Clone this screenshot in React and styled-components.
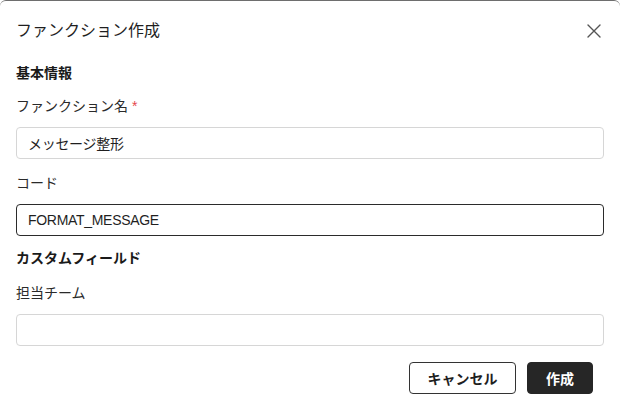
import React from "react";
import styled, { createGlobalStyle } from "styled-components";

const Global = createGlobalStyle`
  html, body { margin: 0; padding: 0; background: #ffffff; }
  body {
    font-family: "Liberation Sans", "Noto Sans CJK JP", sans-serif;
    color: #1f1f1f;
    -webkit-font-smoothing: antialiased;
  }
  * { box-sizing: border-box; }
`;

const Dialog = styled.div`
  width: 620px;
  height: 410px;
  border-top: 1px solid #6e6e6e;
  border-radius: 6px 6px 0 0;
  background: #fff;
  padding: 0 16px;
  display: flex;
  flex-direction: column;
  overflow: hidden;
`;

const Header = styled.div`
  display: flex;
  align-items: center;
  justify-content: space-between;
  padding-top: 19px;
  height: 41px;
`;

const Title = styled.h2`
  margin: 0;
  font-size: 16px;
  line-height: 22px;
  font-weight: 400;
  color: #1f1f1f;
`;

const CloseButton = styled.button`
  border: none;
  background: none;
  padding: 0;
  margin-right: 1px;
  width: 18px;
  height: 18px;
  display: flex;
  align-items: center;
  justify-content: center;
  color: #555;
  cursor: pointer;
`;

const SectionTitle = styled.h3`
  margin: ${(p) => p.$top}px 0 0;
  font-size: 14px;
  line-height: 22px;
  font-weight: 700;
  color: #1a1a1a;
`;

const Field = styled.div`
  display: flex;
  flex-direction: column;
  gap: 10px;
  margin-top: ${(p) => p.$top}px;
`;

const Label = styled.label`
  font-size: 14px;
  line-height: 22px;
  color: #2a2a2a;
`;

const Required = styled.span`
  color: #e5484d;
  margin-left: 4px;
`;

const Input = styled.input`
  width: 100%;
  height: 32px;
  border: 1px solid ${(p) => (p.$focused ? "#2b2b2b" : "#d6d6d6")};
  border-radius: 4px;
  padding: 0 11px;
  font-family: "Liberation Sans", "Noto Sans CJK JP", sans-serif;
  font-size: 14px;
  letter-spacing: -0.3px;
  color: #1f1f1f;
  background: #fff;
  outline: none;
`;

const Footer = styled.div`
  display: flex;
  justify-content: flex-end;
  gap: 11px;
  margin-top: 16px;
  padding-right: 11px;
`;

const Button = styled.button`
  height: 32px;
  width: ${(p) => p.$width}px;
  padding: 0;
  border-radius: 4px;
  border: 1px solid ${(p) => (p.$primary ? "#262626" : "#333")};
  background: ${(p) => (p.$primary ? "#262626" : "#fff")};
  color: ${(p) => (p.$primary ? "#fff" : "#1f1f1f")};
  font-family: "Liberation Sans", "Noto Sans CJK JP", sans-serif;
  font-size: 14px;
  font-weight: 700;
  cursor: pointer;
`;

export default function App() {
  return (
    <>
      <Global />
      <Dialog>
        <Header>
          <Title>ファンクション作成</Title>
          <CloseButton aria-label="close">
            <svg width="14" height="14" viewBox="0 0 14 14" fill="none">
              <path d="M1 1L13 13M13 1L1 13" stroke="currentColor" strokeWidth="1.4" strokeLinecap="round" />
            </svg>
          </CloseButton>
        </Header>
        <SectionTitle $top={20}>基本情報</SectionTitle>
        <Field $top={11}>
          <Label>
            ファンクション名<Required>*</Required>
          </Label>
          <Input defaultValue="メッセージ整形" />
        </Field>
        <Field $top={13}>
          <Label>コード</Label>
          <Input $focused defaultValue="FORMAT_MESSAGE" />
        </Field>
        <SectionTitle $top={11}>カスタムフィールド</SectionTitle>
        <Field $top={13}>
          <Label>担当チーム</Label>
          <Input defaultValue="" />
        </Field>
        <Footer>
          <Button $width={107}>キャンセル</Button>
          <Button $primary $width={66}>作成</Button>
        </Footer>
      </Dialog>
    </>
  );
}
